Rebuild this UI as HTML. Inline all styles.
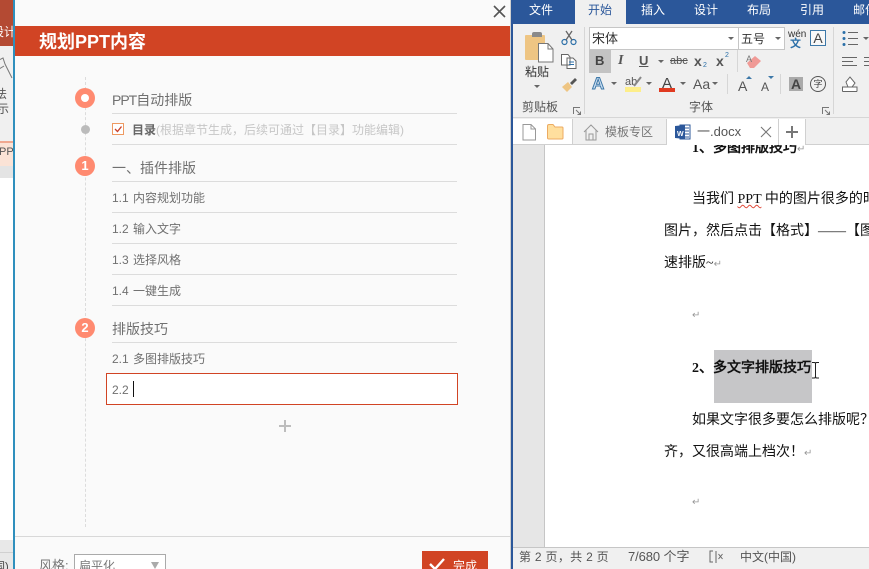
<!DOCTYPE html>
<html lang="zh"><head><meta charset="utf-8"><style>
html,body{margin:0;padding:0;background:#fff}
#p{position:relative;width:869px;height:569px;overflow:hidden;background:#fff;font-family:"Liberation Sans","Noto Sans CJK SC",sans-serif;color:#666}
#p div,#p span.a,#p svg{position:absolute}
.t{white-space:nowrap;line-height:16px}
.l{height:1px;background:#dcdcdc;left:112px;width:345px}
.n{width:20px;height:20px;border-radius:50%;background:#ff8a70;color:#fff;font-size:13px;line-height:20px;text-align:center;left:75px;font-weight:bold}
.s{font-size:12px;color:#707070;left:112px;word-spacing:1px}
.h{font-size:14px;color:#707070;left:112px}
.tab{color:#fff;font-size:12px;top:2px;white-space:nowrap;line-height:16px}
.d{font-family:"WenQuanYi Zen Hei","Liberation Serif",serif;font-size:14px;color:#111;white-space:nowrap;line-height:18px}
.g{font-size:12px;color:#555;white-space:nowrap;line-height:14px}
.r{color:#999;font-size:10px;line-height:12px;white-space:nowrap}
</style></head><body><div id="p">

<!-- left background app -->
<div style="left:0;top:0;width:14px;height:569px;background:#fff"></div>
<div style="left:0;top:0;width:14px;height:46px;background:#b44a33"></div>
<div class="t" style="left:-8px;top:24px;font-size:12px;color:#fff">设计</div>
<div style="left:0;top:46px;width:14px;height:95px;background:#f0f0f0"></div>
<div class="t" style="left:-5px;top:86px;font-size:12px;color:#555">法</div>
<div class="t" style="left:-3px;top:101px;font-size:12px;color:#555">示</div>
<svg style="left:0;top:56px" width="14" height="24"><path d="M-1 4L3 2L5 8L12 22M-1 13L4 10" fill="none" stroke="#777"/></svg>
<div style="left:0;top:141px;width:14px;height:25px;background:#fbe3d6"></div>
<div style="left:0;top:141px;width:14px;height:2px;background:#f0a890"></div>
<div class="t" style="left:-1px;top:144px;font-size:11px;color:#555">PP</div>
<div style="left:0;top:166px;width:14px;height:12px;background:#e4e4e4"></div>
<div style="left:0;top:540px;width:14px;height:29px;background:#e8e8e8"></div>
<div style="left:0;top:552px;width:14px;height:1px;background:#d0d0d0"></div>
<div class="t" style="left:-6px;top:559px;font-size:11px;color:#444">国)</div>

<!-- dialog -->
<div style="left:13px;top:0;width:2px;height:569px;background:#2f8fbd"></div>
<div style="left:15px;top:0;width:495px;height:569px;background:#fafafa"></div>
<div style="left:510px;top:0;width:2px;height:569px;background:#d0d0d0"></div>
<svg style="left:493px;top:5px" width="13" height="13"><path d="M1 1L12 12M12 1L1 12" stroke="#555" stroke-width="1.6"/></svg>
<div style="left:15px;top:26px;width:495px;height:30px;background:#d14424"></div>
<div class="t" style="left:39px;top:32px;font-size:18px;font-weight:bold;color:#fff;line-height:20px">规划PPT内容</div>

<!-- timeline -->
<div style="left:85px;top:77px;width:0;height:450px;border-left:1px dashed #dcdcdc"></div>
<div style="left:75px;top:88px;width:20px;height:20px;border-radius:50%;background:#ff8a70"></div>
<div style="left:81px;top:94px;width:8px;height:8px;border-radius:50%;background:#fff"></div>
<div style="left:81px;top:125px;width:9px;height:9px;border-radius:50%;background:#bbb"></div>

<div class="t h" style="top:92px"><span style="letter-spacing:-1px">PPT</span>自动排版</div>
<div class="l" style="top:113px"></div>
<div style="left:112px;top:123px;width:10px;height:10px;border:1px solid #ee9a62;background:#fff"></div>
<svg style="left:112px;top:123px" width="12" height="12"><path d="M3 6L5.500 8.500L9.500 3.500" fill="none" stroke="#c9402a" stroke-width="1.300"/></svg>
<div class="t" style="left:132px;top:122px;font-size:12px;font-weight:bold;color:#666">目录<span style="font-weight:normal;color:#c6c6c6">(根据章节生成，后续可通过【目录】功能编辑)</span></div>
<div class="l" style="top:144px"></div>

<div class="n" style="top:156px">1</div>
<div class="t h" style="top:160px">一、插件排版</div>
<div class="l" style="top:181px"></div>
<div class="t s" style="top:190px">1.1 内容规划功能</div>
<div class="l" style="top:212px"></div>
<div class="t s" style="top:221px">1.2 输入文字</div>
<div class="l" style="top:243px"></div>
<div class="t s" style="top:252px">1.3 选择风格</div>
<div class="l" style="top:274px"></div>
<div class="t s" style="top:283px">1.4 一键生成</div>
<div class="l" style="top:305px"></div>

<div class="n" style="top:318px">2</div>
<div class="t h" style="top:321px">排版技巧</div>
<div class="l" style="top:342px"></div>
<div class="t s" style="top:351px">2.1 多图排版技巧</div>
<div style="left:106px;top:373px;width:350px;height:30px;border:1px solid #d14424;background:#fff"></div>
<div class="t s" style="top:382px">2.2</div>
<div style="left:133px;top:381px;width:1px;height:16px;background:#111"></div>
<div style="left:279px;top:425px;width:12px;height:2px;background:#bdbdbd"></div>
<div style="left:284px;top:420px;width:2px;height:12px;background:#bdbdbd"></div>

<!-- footer -->
<div style="left:15px;top:536px;width:495px;height:1px;background:#d8d8d8"></div>
<div class="t" style="left:39px;top:558px;font-size:13px;color:#777">风格:</div>
<div style="left:74px;top:554px;width:90px;height:20px;border:1px solid #aaa;background:#fff"></div>
<div class="t" style="left:79px;top:558px;font-size:12px;color:#777">扁平化</div>
<svg style="left:151px;top:562px" width="9" height="8"><path d="M0 0H8L4 7Z" fill="#aaa"/></svg>
<div style="left:422px;top:551px;width:66px;height:24px;background:#d14424"></div>
<svg style="left:428px;top:558px" width="18" height="14"><path d="M2 6L7 11L16 1" fill="none" stroke="#fff" stroke-width="2.400"/></svg>
<div class="t" style="left:453px;top:558px;font-size:12px;color:#fff">完成</div>

<!-- word -->
<div style="left:512px;top:0;width:357px;height:569px;background:#fff"></div>
<div style="left:511px;top:0;width:2px;height:569px;background:#2b579a"></div>
<div style="left:513px;top:0;width:356px;height:24px;background:#2b579a"></div>
<div style="left:575px;top:0;width:51px;height:24px;background:#f0f0f0"></div>
<div class="tab" style="left:529px">文件</div>
<div class="tab" style="left:588px;color:#2b579a">开始</div>
<div class="tab" style="left:641px">插入</div>
<div class="tab" style="left:694px">设计</div>
<div class="tab" style="left:747px">布局</div>
<div class="tab" style="left:800px">引用</div>
<div class="tab" style="left:853px">邮件</div>

<!-- ribbon -->
<div style="left:513px;top:24px;width:356px;height:94px;background:#f0f0f0"></div>
<div style="left:513px;top:117px;width:356px;height:1px;background:#d6d6d6"></div>
<!-- clipboard -->
<div style="left:525px;top:35px;width:20px;height:25px;background:#eec583;border-radius:1px"></div>
<div style="left:532px;top:32px;width:10px;height:5px;background:#8a8a8a;border-radius:2px 2px 0 0"></div>
<svg style="left:538px;top:43px" width="16" height="20"><path d="M.5 .5H10L15 6V19H.5Z" fill="#fff" stroke="#777"/><path d="M10 .5V6H15" fill="none" stroke="#777"/></svg>
<div class="t" style="left:525px;top:64px;font-size:12px;color:#333">粘贴</div>
<svg style="left:534px;top:85px" width="7" height="4"><path d="M0 0H6L3 3Z" fill="#666"/></svg>
<svg style="left:561px;top:30px" width="16" height="16"><circle cx="3.500" cy="12" r="2.500" fill="none" stroke="#2b6fa8" stroke-width="1.200"/><circle cx="12.500" cy="12" r="2.500" fill="none" stroke="#2b6fa8" stroke-width="1.200"/><path d="M5 10L11 1M11 10L5 1" stroke="#666" stroke-width="1.300"/></svg>
<svg style="left:561px;top:54px" width="16" height="15"><path d="M.5 .5H7L9 3V11H.5ZM6 4H12L15 7V14.500H6Z" fill="#fff" stroke="#666"/><path d="M8 8H13M8 10.500H13" stroke="#2b6fa8"/></svg>
<svg style="left:561px;top:77px" width="17" height="16"><path d="M1 10L7 5L11 10L6 15Z" fill="#eec583"/><path d="M9 6L14 1L16 3L11 8Z" fill="#555"/></svg>
<div class="g" style="left:522px;top:100px;color:#555">剪贴板</div>
<svg style="left:573px;top:107px" width="8" height="8"><path d="M.5 7V.5H7M3 3L7.500 7.500M7.500 4.500V7.500H4.500" fill="none" stroke="#777"/></svg>
<div style="left:584px;top:27px;width:1px;height:87px;background:#d6d6d6"></div>

<!-- font -->
<div style="left:589px;top:27px;width:148px;height:21px;border:1px solid #c6c6c6;background:#fff"></div>
<div style="left:738px;top:27px;width:47px;height:23px;border:1px solid #c6c6c6;background:#fff;box-sizing:border-box"></div>
<div class="g" style="left:592px;top:32px;font-size:13px;color:#333;font-family:'WenQuanYi Zen Hei',sans-serif">宋体</div>
<div class="g" style="left:741px;top:32px;font-size:12px;color:#333;font-family:'WenQuanYi Zen Hei',sans-serif">五号</div>
<svg style="left:728px;top:37px" width="6" height="4"><path d="M0 0H6L3 3Z" fill="#666"/></svg>
<svg style="left:775px;top:37px" width="6" height="4"><path d="M0 0H6L3 3Z" fill="#666"/></svg>
<div class="r" style="left:788px;top:29px;color:#333;font-size:10px">wén</div>
<div class="r" style="left:790px;top:38px;color:#2b6fa8;font-size:11px;font-weight:bold">文</div>
<div style="left:810px;top:30px;width:14px;height:14px;border:1px solid #3d78a8;background:#f8f8f8;color:#444;font-size:14px;line-height:15px;text-align:center">A</div>
<div style="left:589px;top:50px;width:22px;height:23px;background:#c3c3c3"></div>
<div class="t" style="left:595px;top:53px;font-size:13px;font-weight:bold;color:#444">B</div>
<div class="t" style="left:618px;top:53px;font-size:14px;font-style:italic;font-family:'Liberation Serif',serif;font-weight:bold;color:#555">I</div>
<div class="t" style="left:639px;top:53px;font-size:13px;font-weight:bold;color:#555;text-decoration:underline">U</div>
<svg style="left:658px;top:60px" width="6" height="4"><path d="M0 0H6L3 3Z" fill="#666"/></svg>
<div class="t" style="left:670px;top:53px;font-size:11px;color:#555;text-decoration:line-through">abc</div>
<div class="t" style="left:694px;top:53px;font-size:14px;font-weight:bold;color:#555">x</div>
<div class="t" style="left:703px;top:58px;font-size:7px;color:#2b6fa8">2</div>
<div class="t" style="left:716px;top:53px;font-size:14px;font-weight:bold;color:#555">x</div>
<div class="t" style="left:725px;top:48px;font-size:7px;color:#2b6fa8">2</div>
<div style="left:737px;top:50px;width:1px;height:22px;background:#d6d6d6"></div>
<svg style="left:746px;top:52px" width="16" height="17"><path d="M1 11L9 4L15 9L8 16H4Z" fill="#f09a96"/></svg>
<div class="t" style="left:746px;top:51px;font-size:9px;color:#777">A</div>
<div class="t" style="left:592px;top:75px;font-size:17px;font-weight:bold;color:#cfe0f2;-webkit-text-stroke:1px #3d78a8;line-height:18px">A</div>
<svg style="left:611px;top:82px" width="6" height="4"><path d="M0 0H6L3 3Z" fill="#666"/></svg>
<div class="t" style="left:625px;top:74px;font-size:11px;color:#555">ab</div>
<div style="left:625px;top:87px;width:16px;height:5px;background:#fdee8a"></div>
<svg style="left:633px;top:76px" width="10" height="11"><path d="M1 10L8 1" stroke="#888" stroke-width="2"/></svg>
<svg style="left:646px;top:82px" width="6" height="4"><path d="M0 0H6L3 3Z" fill="#666"/></svg>
<div class="t" style="left:662px;top:76px;font-size:15px;color:#444">A</div>
<div style="left:659px;top:88px;width:16px;height:4px;background:#e03a20"></div>
<svg style="left:680px;top:82px" width="6" height="4"><path d="M0 0H6L3 3Z" fill="#666"/></svg>
<div class="t" style="left:693px;top:76px;font-size:14px;color:#555">Aa</div>
<svg style="left:712px;top:82px" width="6" height="4"><path d="M0 0H6L3 3Z" fill="#666"/></svg>
<div style="left:727px;top:74px;width:1px;height:20px;background:#d6d6d6"></div>
<div class="t" style="left:738px;top:78px;font-size:14px;color:#555">A</div>
<svg style="left:746px;top:76px" width="7" height="4"><path d="M0 3H6L3 0Z" fill="#3d78a8"/></svg>
<div class="t" style="left:761px;top:79px;font-size:12px;color:#555">A</div>
<svg style="left:768px;top:76px" width="7" height="4"><path d="M0 0H6L3 3Z" fill="#3d78a8"/></svg>
<div style="left:780px;top:74px;width:1px;height:20px;background:#d6d6d6"></div>
<div style="left:789px;top:77px;width:14px;height:14px;background:#aaa;color:#444;font-size:14px;line-height:14px;text-align:center;font-weight:bold">A</div>
<div style="left:810px;top:76px;width:14px;height:14px;border:1px solid #555;border-radius:50%;font-size:9px;line-height:14px;text-align:center;color:#444">字</div>
<div class="g" style="left:689px;top:100px">字体</div>
<svg style="left:822px;top:107px" width="8" height="8"><path d="M.5 7V.5H7M3 3L7.500 7.500M7.500 4.500V7.500H4.500" fill="none" stroke="#777"/></svg>
<div style="left:833px;top:27px;width:1px;height:87px;background:#d6d6d6"></div>
<svg style="left:842px;top:30px" width="27" height="64"><path d="M6 2.500H16M6 8.500H16M6 14.500H16M0 27.500H15M0 31.500H11M0 35.500H15M22 27.500H27M22 31.500H27M22 35.500H27" stroke="#666"/><circle cx="2" cy="2.500" r="1.500" fill="#2b6fa8"/><circle cx="2" cy="8.500" r="1.500" fill="#2b6fa8"/><circle cx="2" cy="14.500" r="1.500" fill="#2b6fa8"/><path d="M21 7H27L24 10Z" fill="#666"/><path d="M.5 61.500H15M.5 61.500V57H15V61.500M6 57L4 52L8 47L13 53L10 57Z" fill="#fff" stroke="#666"/></svg>

<!-- tab bar -->
<div style="left:513px;top:118px;width:356px;height:26px;background:#f0f0f0"></div>
<div style="left:513px;top:144px;width:356px;height:1px;background:#d0d0d0"></div>
<div style="left:513px;top:119px;width:59px;height:25px;background:#fff"></div>
<svg style="left:522px;top:124px" width="15" height="17"><path d="M1 .5H9L13.500 5V16H1Z" fill="#fff" stroke="#999"/><path d="M9 .5V5H13.500" fill="none" stroke="#999"/></svg>
<svg style="left:547px;top:124px" width="17" height="16"><path d="M.5 2Q.5 .5 2 .5H6L8 3H15Q16 3 16 4V14Q16 15 15 15H2Q.5 15 .5 14Z" fill="#ffdf9e" stroke="#ecab62"/></svg>
<div style="left:572px;top:119px;width:1px;height:25px;background:#d0d0d0"></div>
<svg style="left:583px;top:124px" width="16" height="17"><path d="M1 8L8 1L15 8M3 6V16H13V6M6 16V10H10V16" fill="none" stroke="#999"/></svg>
<div class="t" style="left:605px;top:124px;font-size:12px;color:#777">模板专区</div>
<div style="left:666px;top:119px;width:1px;height:25px;background:#d0d0d0"></div>
<div style="left:667px;top:119px;width:111px;height:27px;background:#fff"></div>
<svg style="left:675px;top:124px" width="16" height="16"><path d="M5 1H15V15H5Z" fill="#fff" stroke="#2b579a"/><path d="M9 4H14M9 7H14M9 10H14M9 13H14" stroke="#2b579a"/><path d="M0 2L10 1V15L0 14Z" fill="#2b579a"/></svg>
<div class="t" style="left:677px;top:127px;font-size:7px;color:#fff;font-weight:bold">W</div>
<div class="t" style="left:697px;top:124px;font-size:13px;color:#555">一.docx</div>
<svg style="left:760px;top:126px" width="12" height="12"><path d="M1 1L11 11M11 1L1 11" stroke="#777" stroke-width="1.100"/></svg>
<div style="left:778px;top:119px;width:1px;height:25px;background:#d0d0d0"></div>
<div style="left:779px;top:119px;width:26px;height:26px;background:#fff"></div>
<div style="left:805px;top:119px;width:1px;height:25px;background:#d0d0d0"></div>
<div style="left:786px;top:131px;width:12px;height:2px;background:#777"></div>
<div style="left:791px;top:126px;width:2px;height:12px;background:#777"></div>

<!-- doc -->
<div style="left:513px;top:145px;width:31px;height:402px;background:#e6e6e6"></div>
<div style="left:544px;top:145px;width:1px;height:402px;background:#c6c6c6"></div>
<div style="left:545px;top:145px;width:324px;height:402px;overflow:hidden">
  <div class="d" style="left:147px;top:-5px;font-weight:bold">1、多图排版技巧<span style="font-size:10px;color:#999;font-weight:normal">↵</span></div>
  <div class="d" style="left:147px;top:46px">当我们 <span style="text-decoration:underline wavy #e04a3a 1px">PPT</span> 中的图片很多的时候</div>
  <div class="d" style="left:119px;top:78px">图片，然后点击【格式】——【图片</div>
  <div class="d" style="left:119px;top:110px">速排版~<span style="font-size:10px;color:#999">↵</span></div>
  <div class="d" style="left:147px;top:162px;font-size:10px;color:#999">↵</div>
  <div style="left:169px;top:205px;width:98px;height:53px;background:#c6c6c8"></div>
  <div class="d" style="left:147px;top:215px;font-weight:bold">2、多文字排版技巧</div>
  <div class="d" style="left:147px;top:267px">如果文字很多要怎么排版呢？</div>
  <div class="d" style="left:119px;top:299px">齐，又很高端上档次！<span style="font-size:10px;color:#999">↵</span></div>
  <div class="d" style="left:147px;top:349px;font-size:10px;color:#999">↵</div>
  <svg style="left:266px;top:217px" width="9" height="17"><path d="M1 .5H3.500Q4.500 .5 4.500 2V14Q4.500 16 3.500 16H1M8 .5H5.500Q4.500 .5 4.500 2M4.500 14Q4.500 16 5.500 16H8" fill="none" stroke="#222"/></svg>
</div>

<!-- status -->
<div style="left:513px;top:547px;width:356px;height:22px;background:#f0f0f0;border-top:1px solid #c6c6c6;box-sizing:border-box"></div>
<div class="t" style="left:519px;top:549px;font-size:12px;color:#555;letter-spacing:.3px">第 2 页，共 2 页</div>
<div class="t" style="left:628px;top:549px;font-size:13px;color:#555;letter-spacing:-.1px">7/680 个字</div>
<svg style="left:709px;top:550px" width="15" height="14"><path d="M4 1H1V12H4M7 1V13M9.500 4L13.500 9M13.500 4L9.500 9" fill="none" stroke="#666"/></svg>
<div class="t" style="left:740px;top:549px;font-size:12px;color:#555">中文(中国)</div>

</div></body></html>
